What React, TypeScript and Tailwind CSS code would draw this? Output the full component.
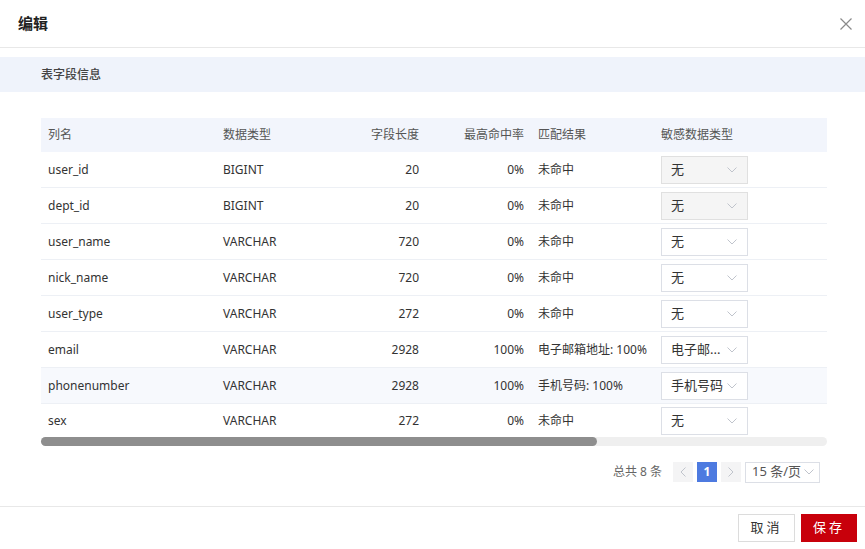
import React from "react";

const rows = [
  { name: "user_id", type: "BIGINT", len: "20", rate: "0%", match: "未命中", sens: "无", disabled: true },
  { name: "dept_id", type: "BIGINT", len: "20", rate: "0%", match: "未命中", sens: "无", disabled: true },
  { name: "user_name", type: "VARCHAR", len: "720", rate: "0%", match: "未命中", sens: "无" },
  { name: "nick_name", type: "VARCHAR", len: "720", rate: "0%", match: "未命中", sens: "无" },
  { name: "user_type", type: "VARCHAR", len: "272", rate: "0%", match: "未命中", sens: "无" },
  { name: "email", type: "VARCHAR", len: "2928", rate: "100%", match: "电子邮箱地址: 100%", sens: "电子邮..." },
  { name: "phonenumber", type: "VARCHAR", len: "2928", rate: "100%", match: "手机号码: 100%", sens: "手机号码", hover: true },
  { name: "sex", type: "VARCHAR", len: "272", rate: "0%", match: "未命中", sens: "无", last: true },
];

const Chevron = ({ className = "" }: { className?: string }) => (
  <svg width="10" height="6" viewBox="0 0 10 6" className={className} fill="none">
    <path d="M0.5 0.5 L5 5 L9.5 0.5" stroke="currentColor" strokeWidth="1" />
  </svg>
);

const grid = "grid grid-cols-[175px_110px_100px_105px_123px_173px]";

export default function App() {
  return (
    <div
      className="w-[865px] h-[549px] bg-white flex flex-col text-[#333]"
      style={{ fontFamily: '"Noto Sans", "Noto Sans CJK SC", sans-serif' }}
    >
      {/* header */}
      <div className="h-[48px] flex items-center justify-between pl-[18px] pr-[13px] border-b border-[#e8e8e8] shrink-0">
        <span className="text-[15px] font-bold text-[#222]">编辑</span>
        <svg width="12" height="12" viewBox="0 0 12 12" className="text-[#8a8a8a]">
          <path d="M0.5 0.5 L11.5 11.5 M11.5 0.5 L0.5 11.5" stroke="currentColor" strokeWidth="1.2" />
        </svg>
      </div>

      {/* section bar */}
      <div className="mt-[9px] h-[35px] bg-[#eff3fb] flex items-center pl-[41px] shrink-0">
        <span className="text-[12px] font-medium text-[#444]">表字段信息</span>
      </div>

      {/* table */}
      <div className="mt-[26px] mx-[41px] w-[786px] text-[12px]">
        <div className={`${grid} h-[34px] items-center bg-[#f2f5fc] text-[#555]`}>
          <div className="px-[7px]">列名</div>
          <div className="px-[7px]">数据类型</div>
          <div className="px-[7px] text-right">字段长度</div>
          <div className="px-[7px] text-right">最高命中率</div>
          <div className="px-[7px]">匹配结果</div>
          <div className="px-[7px]">敏感数据类型</div>
        </div>
        {rows.map((r) => (
          <div
            key={r.name}
            className={`${grid} ${r.last ? "h-[33px]" : "h-[36px] border-b border-[#edf0f5]"} items-center ${
              r.hover ? "bg-[#f7f9fd]" : ""
            }`}
          >
            <div className="px-[7px]">{r.name}</div>
            <div className="px-[7px]">{r.type}</div>
            <div className="px-[7px] text-right">{r.len}</div>
            <div className="px-[7px] text-right">{r.rate}</div>
            <div className="px-[7px] whitespace-nowrap">{r.match}</div>
            <div className="pl-[7px]">
              <div
                className={`w-[87px] h-[28px] border flex items-center justify-between pl-[9px] pr-[10px] text-[13px] ${
                  r.disabled ? "bg-[#f5f5f5] border-[#e0e0e0]" : "bg-white border-[#dcdfe6]"
                }`}
              >
                <span className="text-[#333]">{r.sens}</span>
                <Chevron className="text-[#c0c4cc]" />
              </div>
            </div>
          </div>
        ))}
        <div className="h-[9px] rounded-full bg-[#efefef]">
          <div className="h-[9px] w-[556px] rounded-full bg-[#8e8e8e]" />
        </div>
      </div>

      {/* pagination */}
      <div className="mt-[16px] flex items-center justify-end pr-[45px] text-[12px] h-[20px]">
        <span className="text-[#666] mr-[11px]">总共 8 条</span>
        <div className="w-[20px] h-[20px] bg-[#f4f4f5] flex items-center justify-center text-[#c0c4cc]">
          <svg width="6" height="10" viewBox="0 0 6 10" fill="none">
            <path d="M5.5 0.5 L1 5 L5.5 9.5" stroke="currentColor" strokeWidth="1" />
          </svg>
        </div>
        <div className="ml-[4px] w-[20px] h-[20px] bg-[#4d7ae0] text-white flex items-center justify-center font-bold">1</div>
        <div className="ml-[4px] w-[20px] h-[20px] bg-[#f4f4f5] flex items-center justify-center text-[#c0c4cc]">
          <svg width="6" height="10" viewBox="0 0 6 10" fill="none">
            <path d="M0.5 0.5 L5 5 L0.5 9.5" stroke="currentColor" strokeWidth="1" />
          </svg>
        </div>
        <div className="ml-[4px] w-[75px] h-[21px] border border-[#dcdfe6] flex items-center pl-[6px] pr-[5px] justify-between text-[#555] text-[13px]">
          <span>15 条/页</span>
          <Chevron className="text-[#c0c4cc]" />
        </div>
      </div>

      {/* footer */}
      <div className="mt-auto border-t border-[#e8e8e8] h-[43px] flex items-center justify-end pr-[8px] gap-[6px] pb-[1px]">
        <button className="w-[57px] h-[28px] border border-[#dcdcdc] bg-white text-[13px] text-[#333] tracking-[3px]">
          取消
        </button>
        <button className="w-[56px] h-[28px] bg-[#c8000b] text-white text-[13px] tracking-[3px]">保存</button>
      </div>
    </div>
  );
}
